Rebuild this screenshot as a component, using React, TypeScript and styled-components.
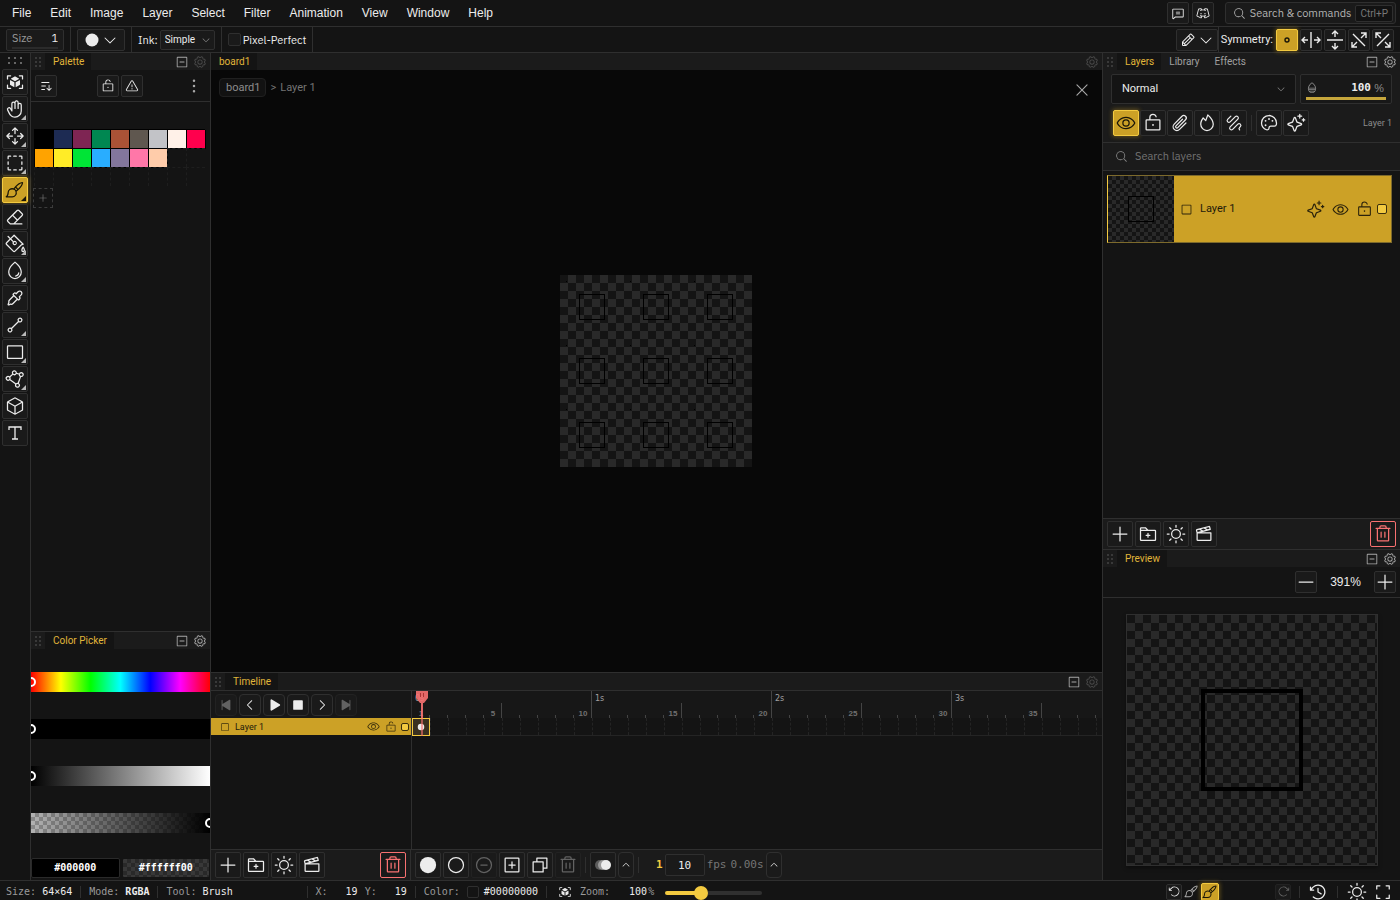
import React, { useLayoutEffect, useRef, useState } from 'react';
import styled, { createGlobalStyle, css } from 'styled-components';
import {
  PiArrowClockwise, PiArrowCounterClockwise, PiArrowsOutCardinal, PiCaretDown, PiCaretLeft, PiCaretRight, PiCaretUp,
  PiChatText, PiCircle, PiCircleFill, PiClockCounterClockwise, PiCopy, PiCornersOut, PiCube, PiCubeFocusFill,
  PiDiscordLogo, PiDotsThreeVerticalBold, PiDrop, PiDropHalfBottom, PiEraser, PiEye, PiEyedropper, PiFilmSlate, PiFireSimple,
  PiFolderPlus, PiGear, PiHand, PiLineSegment, PiLockOpen, PiMagnifyingGlass, PiMinus, PiMinusCircle,
  PiMinusSquare, PiPaintBrush, PiPaintBucket, PiPalette, PiPaperclip, PiPencil, PiPlayFill, PiPlus, PiPlusSquare,
  PiPolygon, PiRectangle, PiScribble, PiSelection, PiSkipBackFill, PiSkipForwardFill, PiSortAscending, PiSparkle,
  PiSquare, PiStopFill, PiSun, PiTrash, PiWarning, PiX,
} from 'react-icons/pi';

const c = {
  bg: '#141414', panel: '#1b1b1b', stage: '#080808', line: '#2f2f2f', soft: '#2a2a2a',
  text: '#ececec', dim: '#8c8c8c', gold: '#cca126', goldHi: '#f3ca40', red: '#f87171',
};
const menuFont = '"Liberation Sans", Arial, sans-serif';
const ui = 'Roboto, "Liberation Sans", sans-serif';
const plex = '"IBM Plex Sans", "Noto Sans", sans-serif';
const mono = '"DejaVu Sans Mono", monospace';

const Global = createGlobalStyle`
  * { box-sizing: border-box; }
  body { margin: 0; background: ${c.bg}; color: ${c.text}; font: 11px/16px ${ui}; overflow: hidden; }
  button, input, select { font: inherit; color: inherit; margin: 0; }
  button { cursor: pointer; }
  svg { display: block; flex: none; }
  ul { list-style: none; margin: 0; padding: 0; }
`;

const checker = (light: string, dark: string, cell: number) =>
  css`background: repeating-conic-gradient(${light} 0 25%, ${dark} 0 50%) 0 0 / ${cell * 2}px ${cell * 2}px;`;

const Shell = styled.div`
  display: grid;
  grid-template-rows: 27px 26px minmax(0, 1fr) 20px;
  height: 100vh;
`;
const Spacer = styled.div`flex: 1;`;

const Btn = styled.button<{ $s?: number; $w?: number; $on?: boolean; $off?: boolean; $danger?: boolean }>`
  position: relative;
  display: flex;
  align-items: center;
  justify-content: center;
  flex: none;
  width: ${p => p.$w ?? p.$s ?? 26}px;
  height: ${p => p.$s ?? 26}px;
  padding: 0;
  border: 1px solid ${p => (p.$danger ? c.red : p.$on ? c.goldHi : c.line)};
  border-radius: 2px;
  background: ${p => (p.$on ? c.gold : '#1a1a1a')};
  color: ${p => (p.$danger ? c.red : p.$on ? '#1a1608' : c.text)};
  ${p => p.$on && css`box-shadow: 0 0 4px 1px rgba(204, 161, 38, 0.4);`}
  ${p => p.$off && css`border-color: #222; color: #626262;`}
`;
const Bare = styled.button<{ $dim?: boolean; $bright?: boolean }>`
  display: flex;
  padding: 0;
  border: 0;
  background: none;
  color: ${p => (p.$dim ? '#4a4a4a' : p.$bright ? c.text : '#a8a8a8')};
`;

/* menu bar */
const MenuBar = styled.header`
  display: flex;
  align-items: center;
  gap: 1px;
  padding: 0 4px 0 3px;
  border-bottom: 1px solid ${c.line};
`;
const MenuItem = styled.button`
  padding: 0 9px;
  border: 0;
  background: none;
  font: 12px/24px ${menuFont};
`;
const TopButtons = styled.div`display: flex; gap: 3px; margin-right: 10px;`;
const SearchBox = styled.button`
  display: flex;
  align-items: center;
  gap: 4px;
  height: 22px;
  padding: 0 2px 0 7px;
  border: 1px solid ${c.line};
  border-radius: 3px;
  background: #1a1a1a;
  color: #b4b4b4;
  font-family: ${plex};
  white-space: nowrap;
`;
const Kbd = styled.kbd`
  padding: 0 4px;
  border: 1px solid ${c.line};
  border-radius: 2px;
  background: #121212;
  color: #777;
  font: 10px/15px ${ui};
`;

/* tool options */
const OptionBar = styled.div`
  display: flex;
  align-items: center;
  padding: 0 6px;
  border-bottom: 1px solid ${c.line};
  font-family: ${plex};
`;
const OptGroup = styled.div<{ $first?: boolean }>`
  display: flex;
  align-items: center;
  height: 25px;
  gap: 2px;
  padding: 0 6px 0 ${p => (p.$first ? 0 : 6)}px;
  border-right: 1px solid ${c.line};
`;
const SizeField = styled.label`
  display: grid;
  grid-template-columns: 1fr 20px;
  width: 58px;
  height: 22px;
  padding: 0 5px;
  border: 1px solid ${c.line};
  border-radius: 2px;
  background: #1a1a1a;
  color: #9a9a9a;
  line-height: 16px;
  &::after { content: ''; grid-column: 1 / 3; height: 2px; background: #2b2b2b; }
`;
const SizeInput = styled.input`
  width: 100%;
  height: 16px;
  padding: 0;
  border: 0;
  background: none;
  color: ${c.text};
  text-align: right;
`;
const DropBtn = styled(Btn)`gap: 2px;`;
const SelectWrap = styled.span`
  display: grid;
  align-items: center;
  > * { grid-area: 1 / 1; }
  > svg { justify-self: end; margin-right: 4px; color: #8c8c8c; pointer-events: none; }
`;
const InkSelect = styled.select`
  appearance: none;
  width: 55px;
  height: 20px;
  padding: 0 4px;
  border: 1px solid ${c.line};
  border-radius: 2px;
  background: #1a1a1a;
  font: 10px/18px ${ui};
`;
const CheckLabel = styled.label`display: flex; align-items: center; gap: 2px;`;
const Tick = styled.input`
  appearance: none;
  width: 13px;
  height: 13px;
  border: 1px solid ${c.line};
  border-radius: 2px;
  background: #1a1a1a;
`;
const SymLabel = styled.span`
  padding: 0 3px 0 2px;
  border-left: 1px solid ${c.line};
  font: 11px/25px ${ui};
`;
const SymGroup = styled.div`display: flex; gap: 2px;`;

/* workspace */
const Work = styled.main`
  display: grid;
  grid-template-columns: 31px 180px minmax(0, 1fr) 297px;
  min-height: 0;
`;
const Tools = styled.nav`
  display: flex;
  flex-direction: column;
  align-items: center;
  gap: 1px;
  padding-right: 1px;
  border-right: 1px solid ${c.line};
`;
const ToolGrip = styled.span`
  width: 14px;
  height: 7px;
  margin: 4px 0;
  background: radial-gradient(circle at 1px 1px, #666 1px, transparent 1px) 0 0 / 6px 5px;
`;
const Tool = styled(Btn)<{ $menu?: boolean }>`
  ${p => p.$menu && css`
    &::after {
      content: '';
      position: absolute;
      right: 1px;
      bottom: 1px;
      border-left: 5px solid transparent;
      border-bottom: 5px solid ${p.$on ? '#1a1608' : '#b8b8b8'};
    }
  `}
`;
const Side = styled.aside<{ $edge?: boolean }>`
  display: flex;
  flex-direction: column;
  min-width: 0;
  min-height: 0;
  ${p => p.$edge && css`border-right: 1px solid ${c.line};`}
`;
const Panel = styled.section<{ $grow?: boolean; $top?: boolean }>`
  display: flex;
  flex-direction: column;
  min-height: 0;
  flex: ${p => (p.$grow ? '1 1 0' : 'none')};
  ${p => p.$top && css`border-top: 1px solid ${c.line};`}
`;
const Head = styled.div<{ $line?: boolean }>`
  display: flex;
  align-items: center;
  height: ${p => (p.$line ? 18 : 17)}px;
  flex: none;
  padding-right: 3px;
  background: ${c.panel};
  ${p => p.$line && css`border-bottom: 1px solid ${c.line};`}
`;
const Grip = styled.span`
  width: 6px;
  height: 10px;
  margin: 0 4px;
  background: radial-gradient(circle at 1px 1px, #393939 1px, transparent 1px) 0 0 / 4px 4px;
`;
const Tab = styled.button<{ $on?: boolean }>`
  height: 100%;
  padding: 0 7px 0 8px;
  border: 0;
  background: ${p => (p.$on ? c.bg : 'none')};
  color: ${p => (p.$on ? '#e0b63a' : '#a0a0a0')};
  font-size: 10px;
  line-height: 16px;
`;
const HeadTools = styled.div`display: flex; gap: 4px; margin-left: auto;`;

const PaletteBar = styled.div`
  display: grid;
  grid-template-columns: 62px 24px 1fr auto;
  align-items: center;
  height: 32px;
  padding: 0 6px 0 4px;
  border-bottom: 1px solid ${c.line};
`;
const Swatches = styled.ul`
  display: grid;
  grid-template-columns: repeat(9, 19px);
  grid-auto-rows: 19px;
  margin: 27px 0 0 3px;
`;
const Swatch = styled.li<{ $c?: string }>`
  border: 1px ${p => (p.$c ? 'solid #000' : 'dashed #1e1e1e')};
  border-right: 0;
  border-bottom: 0;
  background: ${p => p.$c ?? 'transparent'};
  ${p => p.$c && css`box-shadow: 1px 1px #000;`}
`;
const AddSwatch = styled.button`
  display: flex;
  align-items: center;
  justify-content: center;
  width: 20px;
  height: 20px;
  margin: 2px;
  padding: 0;
  border: 1px dashed #3c3c3c;
  background: none;
  color: #808080;
`;
const Picker = styled.div`
  display: grid;
  gap: 27px;
  padding: 23px 0 25px;
`;
const Track = styled.div<{ $bg: string }>`
  height: 20px;
  overflow: hidden;
  background: ${p => p.$bg};
`;
const PickRange = styled.input`
  display: block;
  appearance: none;
  width: calc(100% + 10px);
  height: 20px;
  margin: 0 -5px;
  background: none;
  &::-webkit-slider-thumb {
    appearance: none;
    width: 10px;
    height: 10px;
    border: 2px solid #fff;
    border-radius: 50%;
    background: transparent;
  }
`;
const HexRow = styled.div`display: grid; grid-template-columns: 1fr 1fr; gap: 2px; padding-bottom: 2px;`;
const Hex = styled.button<{ $clear?: boolean }>`
  height: 20px;
  padding: 0;
  border: 1px solid ${p => (p.$clear ? c.bg : c.soft)};
  border-radius: 2px;
  background: #000;
  ${p => p.$clear && checker('#292929', '#383838', 4)}
  color: #fff;
  font: bold 10px/18px ${mono};
`;

/* stage */
const Center = styled.div`
  display: flex;
  flex-direction: column;
  min-width: 0;
  min-height: 0;
  border-right: 1px solid ${c.line};
`;
const Stage = styled.div`
  position: relative;
  display: flex;
  align-items: center;
  justify-content: center;
  flex: 1;
  min-height: 0;
  padding-right: 1px;
  background: ${c.stage};
`;
const Crumbs = styled.div`
  position: absolute;
  top: 8px;
  left: 8px;
  display: flex;
  align-items: center;
  gap: 4px;
  color: #747474;
`;
const Crumb = styled.button`
  height: 19px;
  padding: 0 5px 0 6px;
  border: 1px solid #202020;
  border-radius: 4px;
  background: #121212;
  color: #8d8d8d;
`;
const CloseBtn = styled(Bare)`
  position: absolute;
  top: 11px;
  right: 11px;
`;
const Artboard = styled.div`
  width: 192px;
  height: 192px;
  ${checker('#292929', '#141414', 8)}
`;

/* timeline */
const TLBody = styled.div`
  display: grid;
  grid-template-columns: 201px minmax(0, 1fr);
  height: 158px;
`;
const TLSide = styled.div`border-right: 1px solid ${c.line};`;
const Transport = styled.div`display: flex; gap: 2px; padding: 3px 4px 2px; background: #171717;`;
const TBtn = styled(Btn)`border-radius: 4px;`;
const TLLayer = styled.div`
  display: flex;
  align-items: center;
  height: 17px;
  padding: 0 2px 0 9px;
  background: ${c.gold};
  color: #3a2e0c;
  font-size: 9px;
`;
const LayerName = styled.span<{ $gap: number }>`flex: 1; margin-left: ${p => p.$gap}px; color: #1f1a0a;`;
const Mark = styled.span<{ $s: number }>`
  width: ${p => p.$s}px;
  height: ${p => p.$s}px;
  margin-left: 4px;
  border: 1px solid #3a2e0c;
  border-radius: 2px;
  background: ${c.goldHi};
`;
const Frames = styled.div`position: relative; overflow: hidden;`;
const Ruler = styled.div`display: flex; height: 27px; background: #171717;`;
const RulerCell = styled.div<{ $tick: number }>`
  position: relative;
  display: flex;
  align-items: flex-end;
  justify-content: center;
  flex: none;
  width: 18px;
  color: #707070;
  font: bold 8px/8px ${menuFont};
  &::after {
    content: '';
    position: absolute;
    right: 0;
    bottom: 0;
    width: 1px;
    height: ${p => p.$tick}px;
    background: #444;
  }
`;
const Sec = styled.span`
  position: absolute;
  top: 4px;
  left: 3px;
  color: #a0a0a0;
  font: 8px/8px "DejaVu Sans", sans-serif;
`;
const FrameRow = styled.div`display: flex; height: 18px; border-bottom: 1px solid #242424;`;
const Frame = styled.button<{ $on?: boolean }>`
  display: flex;
  align-items: center;
  justify-content: center;
  flex: none;
  width: 18px;
  height: ${p => (p.$on ? 18 : 17)}px;
  padding: 0;
  border: 0;
  border-left: 1px dashed #242424;
  background: none;
  ${p => p.$on && css`border: 1px solid ${c.goldHi}; background: #3a3120;`}
`;
const Playhead = styled.div`
  position: absolute;
  top: 0;
  left: 4px;
  width: 12px;
  height: 45px;
  color: ${c.red};
`;
const TLFoot = styled.div`
  display: flex;
  border-top: 1px solid ${c.line};
  background: ${c.panel};
`;
const FootLeft = styled.div`
  display: flex;
  gap: 2px;
  width: 200px;
  padding: 2px 4px;
  border-right: 1px solid ${c.line};
`;
const FootRight = styled.div`
  display: flex;
  align-items: center;
  gap: 2px;
  padding: 2px 4px;
  color: #757575;
  font: 11px/16px ${mono};
`;
const Sep = styled.span<{ $m?: number; $h?: number }>`
  flex: none;
  width: 1px;
  height: ${p => p.$h ?? 16}px;
  margin: 0 ${p => p.$m ?? 2}px;
  background: ${c.line};
`;
const Now = styled.b`margin-left: 13px; color: ${c.goldHi};`;
const Fps = styled.input`
  width: 40px;
  height: 22px;
  border: 1px solid ${c.line};
  border-radius: 2px;
  background: #1a1a1a;
  color: ${c.text};
  text-align: center;
`;
const Elapsed = styled.span`margin-left: 2px;`;

/* layers */
const LayerOpts = styled.div`background: ${c.panel}; border-bottom: 1px solid ${c.line};`;
const BlendRow = styled.div`display: grid; grid-template-columns: 1fr 92px; gap: 4px; padding: 4px 8px 6px;`;
const BlendSelect = styled.select`
  appearance: none;
  width: 100%;
  height: 30px;
  padding: 0 10px;
  border: 1px solid ${c.line};
  border-radius: 2px;
  background: ${c.bg};
`;
const BlendWrap = styled(SelectWrap)`> svg { margin-right: 10px; }`;
const Opacity = styled.label`
  display: grid;
  grid-template-columns: 14px 1fr 12px;
  align-items: center;
  gap: 0 3px;
  padding: 4px 5px 3px;
  border: 1px solid ${c.line};
  border-radius: 2px;
  background: #181818;
  color: #8c8c8c;
  font-family: ${plex};
  &::after { content: ''; grid-column: 1 / 4; height: 3px; background: #c6a63c; }
`;
const OpacityInput = styled.input`
  width: 100%;
  height: 16px;
  padding: 0;
  border: 0;
  background: none;
  color: ${c.text};
  font: bold 11px/16px ${mono};
  text-align: right;
`;
const LockRow = styled.div`
  display: flex;
  align-items: center;
  gap: 1px;
  padding: 0 8px 6px 10px;
  color: ${c.dim};
  font-size: 9px;
`;
const LayerSearch = styled.label`
  display: flex;
  align-items: center;
  gap: 7px;
  height: 28px;
  padding: 0 12px 1px;
  border-bottom: 1px solid ${c.line};
  background: ${c.panel};
  color: #8a8a8a;
`;
const LayerSearchInput = styled.input`
  flex: 1;
  padding: 0;
  border: 0;
  background: none;
  font-family: ${plex};
  &::placeholder { color: #747474; }
`;
const LayerList = styled.ul`flex: 1; padding: 4px 8px 4px 4px;`;
const LayerItem = styled.li`
  display: flex;
  align-items: center;
  height: 68px;
  padding-right: 4px;
  border: 1px solid #7d6a2c;
  border-left-color: ${c.goldHi};
  background: ${c.gold};
  color: #2a220b;
  font-size: 11px;
`;
const Thumb = styled.div`
  width: 66px;
  height: 66px;
  margin-right: 6px;
  padding: 1px;
  ${checker('#292929', '#141414', 4)}
`;
const LayerActs = styled.div<{ $gap: number }>`display: flex; align-items: center; gap: ${p => p.$gap}px;`;
const PanelFoot = styled.div`
  display: flex;
  gap: 2px;
  padding: 2px 4px;
  border-top: 1px solid ${c.line};
  background: ${c.panel};
`;
const ZoomBar = styled.div`
  display: flex;
  align-items: center;
  justify-content: flex-end;
  height: 31px;
  padding: 0 4px;
  border-bottom: 1px solid ${c.line};
  font: 12px/16px ${menuFont};
`;
const ZoomValue = styled.span`width: 57px; text-align: center;`;
const PreviewArea = styled.div`display: flex; justify-content: center; padding: 16px 0 14px;`;
const PreviewBoard = styled.div`
  width: 252px;
  height: 252px;
  border: 1px solid ${c.line};
  box-shadow: 0 2px 4px rgba(0, 0, 0, 0.4);
  ${checker('#292929', '#141414', 8)}
`;

/* status bar */
const Status = styled.footer`
  display: flex;
  align-items: center;
  padding: 2px 7px 0 6px;
  border-top: 1px solid ${c.line};
  color: #9a9a9a;
  font: 10px/16px ${mono};
  white-space: pre;
  b { color: ${c.text}; }
`;
const Val = styled.span<{ $w?: number; $r?: number }>`
  width: ${p => (p.$w ? `${p.$w}px` : 'auto')};
  margin-right: ${p => p.$r ?? 0}px;
  color: ${c.text};
  text-align: right;
`;
const ToolVal = styled.span`width: 104px; color: ${c.text};`;
const Chip = styled.span`
  width: 12px;
  height: 12px;
  margin: 0 5px 0 7px;
  border: 1px solid ${c.line};
  border-radius: 2px;
`;
const FitBtn = styled(Bare)`margin: 0 8px 0 3px;`;
const ZoomRange = styled.input`
  appearance: none;
  width: 97px;
  height: 14px;
  margin: 2px 0 0 11px;
  background: none;
  &::-webkit-slider-runnable-track {
    height: 4px;
    border-radius: 2px;
    background: linear-gradient(90deg, ${c.goldHi} 36%, #303030 36%);
  }
  &::-webkit-slider-thumb {
    appearance: none;
    width: 14px;
    height: 14px;
    margin-top: -5px;
    border-radius: 50%;
    background: ${c.goldHi};
  }
`;
const History = styled.div`display: flex; align-items: center; gap: 2px; width: 125px; > :last-child { margin-left: auto; }`;
const StatusIcons = styled.div`display: flex; align-items: center; gap: 6px;`;

const Symmetry = ({ kind }: { kind: 'none' | 'h' | 'v' | 'd1' | 'd2' }) => (
  <svg width="20" height="20" viewBox="0 0 20 20" fill="none" stroke="currentColor" strokeWidth="1.4">
    {kind === 'none' && <circle cx="10" cy="10" r="2" />}
    {kind === 'h' && <path d="M10 2v16M7 10H1M4 7l-3 3 3 3M13 10h6M16 7l3 3-3 3" />}
    {kind === 'v' && <path d="M2 10h16M10 7V1M7 4l3-3 3 3M10 13v6M7 16l3 3 3-3" />}
    {kind === 'd1' && <path d="M4 4l12 12M12 8l5-5M12 3h5v5M8 12l-5 5M3 12v5h5" />}
    {kind === 'd2' && <path d="M16 4L4 16M8 8L3 3M8 3H3v5M12 12l5 5M17 12v5h-5" />}
  </svg>
);
const Onion = () => (
  <svg width="18" height="12" viewBox="0 0 18 12">
    <circle cx="6" cy="6" r="5" fill="#5c5c5c" />
    <circle cx="9" cy="6" r="5" fill="#999" />
    <circle cx="12" cy="6" r="5" fill="#ececec" />
  </svg>
);
const TextTool = () => (
  <svg width="20" height="20" viewBox="0 0 20 20" fill="none" stroke="currentColor" strokeWidth="1.3">
    <path d="M4 7V4h12v3M10 4v12M7 16h6" />
  </svg>
);

const menus = ['File', 'Edit', 'Image', 'Layer', 'Select', 'Filter', 'Animation', 'View', 'Window', 'Help'];
const tools: { name: string; icon: React.ReactNode; menu?: boolean; on?: boolean }[] = [
  { name: 'Focus', icon: <PiCubeFocusFill size={20} /> },
  { name: 'Pan', icon: <PiHand size={20} />, menu: true },
  { name: 'Move', icon: <PiArrowsOutCardinal size={20} />, menu: true },
  { name: 'Select', icon: <PiSelection size={20} />, menu: true },
  { name: 'Brush', icon: <PiPaintBrush size={20} />, menu: true, on: true },
  { name: 'Eraser', icon: <PiEraser size={20} /> },
  { name: 'Fill', icon: <PiPaintBucket size={20} />, menu: true },
  { name: 'Blur', icon: <PiDrop size={20} />, menu: true },
  { name: 'Eyedropper', icon: <PiEyedropper size={20} /> },
  { name: 'Line', icon: <PiLineSegment size={20} />, menu: true },
  { name: 'Rectangle', icon: <PiRectangle size={20} />, menu: true },
  { name: 'Polygon', icon: <PiPolygon size={20} />, menu: true },
  { name: '3D', icon: <PiCube size={20} /> },
  { name: 'Text', icon: <TextTool /> },
];
const palette = [
  '#000000', '#1d2b53', '#7e2553', '#008751', '#ab5236', '#5f574f', '#c2c3c7', '#fff1e8', '#ff004d',
  '#ffa300', '#ffec27', '#00e436', '#29adff', '#83769c', '#ff77a8', '#ffccaa',
];
const cells = Array.from({ length: 27 }, (_, i) => palette[i]);
const bars = [
  { name: 'Hue', value: 0, bg: 'linear-gradient(90deg, #f00, #ff0, #0f0, #0ff, #00f, #f0f, #f00)' },
  { name: 'Saturation', value: 0, bg: '#000' },
  { name: 'Value', value: 0, bg: 'linear-gradient(90deg, #000, #fff)' },
  { name: 'Alpha', value: 100, bg: 'linear-gradient(90deg, transparent, #000), repeating-conic-gradient(#8a8a8a 0 25%, #b2b2b2 0 50%) 0 0 / 8px 8px' },
];

const PanelTools = ({ dim }: { dim?: boolean }) => (
  <HeadTools>
    <Bare aria-label="Collapse panel"><PiMinusSquare size={14} /></Bare>
    <Bare aria-label="Panel settings" $dim={dim}><PiGear size={14} /></Bare>
  </HeadTools>
);
const CreateButtons = () => (
  <>
    <Btn aria-label="Add layer"><PiPlus size={20} /></Btn>
    <Btn aria-label="Add group"><PiFolderPlus size={20} /></Btn>
    <Btn aria-label="Add adjustment"><PiSun size={20} /></Btn>
    <Btn aria-label="Add clip"><PiFilmSlate size={20} /></Btn>
    <Spacer />
    <Btn aria-label="Delete" $danger><PiTrash size={20} /></Btn>
  </>
);

function FrameGrid() {
  const ref = useRef<HTMLDivElement>(null);
  const [count, setCount] = useState(38);
  useLayoutEffect(() => {
    const fit = () => ref.current && setCount(Math.ceil(ref.current.clientWidth / 18));
    fit();
    window.addEventListener('resize', fit);
    return () => window.removeEventListener('resize', fit);
  }, []);
  const frames = Array.from({ length: count }, (_, i) => i + 1);
  return (
    <Frames ref={ref}>
      <Ruler>
        {frames.map(f => (
          <RulerCell key={f} $tick={f % 10 === 0 ? 27 : f % 5 === 0 ? 15 : 3}>
            {f % 10 === 1 && <Sec>{(f - 1) / 10}s</Sec>}
            {f === 1 || f % 5 === 0 ? f : ''}
          </RulerCell>
        ))}
      </Ruler>
      <FrameRow>
        {frames.map(f => (
          <Frame key={f} $on={f === 1} aria-label={`Frame ${f}`}>{f === 1 && <PiCircleFill size={8} />}</Frame>
        ))}
      </FrameRow>
      <Playhead>
        <svg width="12" height="45" fill="currentColor">
          <path d="M0 0h12v7l-4 5H4L0 7z" opacity="0.9" />
          <path d="M4.5 2v4M7.5 2v4" stroke="#a33" />
          <path d="M5 12h2v15H5z" opacity="0.9" />
          <path d="M5 27h2v18H5z" opacity="0.6" />
        </svg>
      </Playhead>
    </Frames>
  );
}

export default function App() {
  return (
    <Shell>
      <Global />
      <MenuBar>
        {menus.map(m => <MenuItem key={m}>{m}</MenuItem>)}
        <Spacer />
        <TopButtons>
          <Btn $s={22} aria-label="Feedback"><PiChatText size={14} /></Btn>
          <Btn $s={22} aria-label="Discord"><PiDiscordLogo size={14} /></Btn>
        </TopButtons>
        <SearchBox><PiMagnifyingGlass size={13} />Search &amp; commands <Kbd>Ctrl+P</Kbd></SearchBox>
      </MenuBar>

      <OptionBar>
        <OptGroup $first><SizeField>Size<SizeInput defaultValue="1" /></SizeField></OptGroup>
        <OptGroup>
          <DropBtn $s={22} $w={48} aria-label="Brush shape"><PiCircleFill size={16} /><PiCaretDown size={16} /></DropBtn>
        </OptGroup>
        <OptGroup>
          <label htmlFor="ink">Ink:</label>
          <SelectWrap><InkSelect id="ink"><option>Simple</option></InkSelect><PiCaretDown size={10} /></SelectWrap>
        </OptGroup>
        <OptGroup><CheckLabel><Tick type="checkbox" />Pixel-Perfect</CheckLabel></OptGroup>
        <Spacer />
        <DropBtn $s={22} $w={42} aria-label="Pen mode"><PiPencil size={16} /><PiCaretDown size={16} /></DropBtn>
        <SymLabel>Symmetry:</SymLabel>
        <SymGroup>
          {(['none', 'h', 'v', 'd1', 'd2'] as const).map(k => (
            <Btn key={k} $s={22} $on={k === 'none'} aria-label={`Symmetry ${k}`}><Symmetry kind={k} /></Btn>
          ))}
        </SymGroup>
      </OptionBar>

      <Work>
        <Tools>
          <ToolGrip />
          {tools.map(t => <Tool key={t.name} aria-label={t.name} $on={t.on} $menu={t.menu}>{t.icon}</Tool>)}
        </Tools>

        <Side $edge>
          <Panel $grow>
            <Head><Grip /><Tab $on>Palette</Tab><PanelTools dim /></Head>
            <PaletteBar>
              <Btn $s={22} aria-label="Sort"><PiSortAscending size={14} /></Btn>
              <Btn $s={22} aria-label="Lock palette"><PiLockOpen size={14} /></Btn>
              <Btn $s={22} aria-label="Warnings"><PiWarning size={14} /></Btn>
              <Bare aria-label="More"><PiDotsThreeVerticalBold size={20} /></Bare>
            </PaletteBar>
            <Swatches>{cells.map((s, i) => <Swatch key={i} $c={s} />)}</Swatches>
            <AddSwatch aria-label="Add colour"><PiPlus size={10} /></AddSwatch>
          </Panel>
          <Panel $top>
            <Head><Grip /><Tab $on>Color Picker</Tab><PanelTools /></Head>
            <Picker>
              {bars.map(b => (
                <Track key={b.name} $bg={b.bg}><PickRange type="range" aria-label={b.name} defaultValue={b.value} /></Track>
              ))}
            </Picker>
            <HexRow><Hex>#000000</Hex><Hex $clear>#ffffff00</Hex></HexRow>
          </Panel>
        </Side>

        <Center>
          <Head><Tab $on>board1</Tab><HeadTools><Bare $dim aria-label="Board settings"><PiGear size={14} /></Bare></HeadTools></Head>
          <Stage>
            <Crumbs><Crumb>board1</Crumb>&gt; <span>Layer 1</span></Crumbs>
            <CloseBtn aria-label="Close"><PiX size={18} /></CloseBtn>
            <Artboard>
              <svg width="192" height="192" shapeRendering="crispEdges">
                <pattern id="tile" width="64" height="64" patternUnits="userSpaceOnUse">
                  <rect x="19.5" y="19.5" width="25" height="25" fill="none" stroke="#000" />
                  <rect x="6" y="6" width="1" height="1" fill="#000" />
                </pattern>
                <rect width="192" height="192" fill="url(#tile)" />
              </svg>
            </Artboard>
          </Stage>
          <Panel $top>
            <Head $line><Grip /><Tab $on>Timeline</Tab><PanelTools dim /></Head>
            <TLBody>
              <TLSide>
                <Transport>
                  <TBtn $s={22} $off aria-label="First frame"><PiSkipBackFill size={14} /></TBtn>
                  <TBtn $s={22} aria-label="Previous frame"><PiCaretLeft size={14} /></TBtn>
                  <TBtn $s={22} aria-label="Play"><PiPlayFill size={14} /></TBtn>
                  <TBtn $s={22} aria-label="Stop"><PiStopFill size={14} /></TBtn>
                  <TBtn $s={22} aria-label="Next frame"><PiCaretRight size={14} /></TBtn>
                  <TBtn $s={22} $off aria-label="Last frame"><PiSkipForwardFill size={14} /></TBtn>
                </Transport>
                <TLLayer>
                  <PiSquare size={10} />
                  <LayerName $gap={5}>Layer 1</LayerName>
                  <LayerActs $gap={5}><PiEye size={13} /><PiLockOpen size={12} /></LayerActs>
                  <Mark $s={8} />
                </TLLayer>
              </TLSide>
              <FrameGrid />
            </TLBody>
            <TLFoot>
              <FootLeft><CreateButtons /></FootLeft>
              <FootRight>
                <Btn aria-label="Key frame"><PiCircleFill size={20} /></Btn>
                <Btn aria-label="Blank frame"><PiCircle size={20} /></Btn>
                <Btn $off aria-label="Remove key"><PiMinusCircle size={20} /></Btn>
                <Btn aria-label="Add frame"><PiPlusSquare size={20} /></Btn>
                <Btn aria-label="Duplicate frame"><PiCopy size={20} /></Btn>
                <Btn $off aria-label="Delete frame"><PiTrash size={20} /></Btn>
                <Sep />
                <Btn aria-label="Onion skin"><Onion /></Btn>
                <TBtn $w={16} aria-label="Onion skin options"><PiCaretUp size={10} /></TBtn>
                <Sep />
                <Now>1</Now>
                <Fps aria-label="Frames per second" defaultValue="10" />
                <span>fps</span>
                <Elapsed>0.00s</Elapsed>
                <TBtn $w={16} aria-label="Playback options"><PiCaretUp size={10} /></TBtn>
              </FootRight>
            </TLFoot>
          </Panel>
        </Center>

        <Side>
          <Panel $grow>
            <Head><Grip /><Tab $on>Layers</Tab><Tab>Library</Tab><Tab>Effects</Tab><PanelTools /></Head>
            <LayerOpts>
              <BlendRow>
                <BlendWrap>
                  <BlendSelect aria-label="Blend mode"><option>Normal</option></BlendSelect><PiCaretDown size={10} />
                </BlendWrap>
                <Opacity><PiDropHalfBottom size={12} /><OpacityInput aria-label="Opacity" defaultValue="100" />%</Opacity>
              </BlendRow>
              <LockRow>
                <Btn $on aria-label="Visible"><PiEye size={20} /></Btn>
                <Btn aria-label="Lock"><PiLockOpen size={20} /></Btn>
                <Btn aria-label="Link"><PiPaperclip size={20} /></Btn>
                <Btn aria-label="Burn"><PiFireSimple size={20} /></Btn>
                <Btn aria-label="Sketch"><PiScribble size={20} /></Btn>
                <Sep $m={3} />
                <Btn aria-label="Palette"><PiPalette size={20} /></Btn>
                <Btn aria-label="Layer effects"><PiSparkle size={20} /></Btn>
                <Spacer />
                Layer 1
              </LockRow>
            </LayerOpts>
            <LayerSearch><PiMagnifyingGlass size={13} /><LayerSearchInput placeholder="Search layers" /></LayerSearch>
            <LayerList>
              <LayerItem>
                <Thumb>
                  <svg width="64" height="64"><rect x="19.5" y="19.5" width="25" height="25" fill="none" stroke="#000" /></svg>
                </Thumb>
                <PiSquare size={13} />
                <LayerName $gap={7}>Layer 1</LayerName>
                <LayerActs $gap={7}><PiSparkle size={19} /><PiEye size={17} /><PiLockOpen size={17} /></LayerActs>
                <Mark $s={10} />
              </LayerItem>
            </LayerList>
            <PanelFoot><CreateButtons /></PanelFoot>
          </Panel>
          <Panel $top>
            <Head><Grip /><Tab $on>Preview</Tab><PanelTools /></Head>
            <ZoomBar>
              <Btn $s={22} aria-label="Zoom out"><PiMinus size={20} /></Btn>
              <ZoomValue>391%</ZoomValue>
              <Btn $s={22} aria-label="Zoom in"><PiPlus size={20} /></Btn>
            </ZoomBar>
            <PreviewArea>
              <PreviewBoard>
                <svg width="250" height="250"><rect x="76" y="76" width="98" height="98" fill="none" stroke="#000" strokeWidth="4" /></svg>
              </PreviewBoard>
            </PreviewArea>
          </Panel>
        </Side>
      </Work>

      <Status>
        Size: <Val>64×64</Val><Sep $m={8} $h={12} />
        Mode: <b>RGBA</b><Sep $m={8} $h={12} />
        Tool: <ToolVal>Brush</ToolVal><Sep $h={12} $m={0} />
        <Val $w={8} />X: <Val $w={24} $r={7}>19</Val>Y: <Val $w={24}>19</Val><Sep $m={8} $h={12} />
        Color:<Chip /><Val>#00000000</Val><Sep $m={8} $h={12} />
        <FitBtn $bright aria-label="Fit to window"><PiCubeFocusFill size={14} /></FitBtn>
        Zoom: <Val $w={31} $r={1}>100</Val>%
        <ZoomRange type="range" aria-label="Zoom" defaultValue={35} />
        <Spacer />
        <History>
          <Btn $s={16} aria-label="Undo"><PiArrowCounterClockwise size={13} /></Btn>
          <Bare aria-label="Brush stroke"><PiPaintBrush size={15} /></Bare>
          <Btn $s={18} $on aria-label="Latest brush stroke"><PiPaintBrush size={16} /></Btn>
          <Btn $s={16} $off aria-label="Redo"><PiArrowClockwise size={13} /></Btn>
        </History>
        <Sep $m={8} $h={12} />
        <StatusIcons>
          <Bare $bright aria-label="History"><PiClockCounterClockwise size={20} /></Bare>
          <Sep $m={3} $h={12} />
          <Bare $bright aria-label="Theme"><PiSun size={20} /></Bare>
          <Bare $bright aria-label="Fullscreen"><PiCornersOut size={20} /></Bare>
        </StatusIcons>
      </Status>
    </Shell>
  );
}
